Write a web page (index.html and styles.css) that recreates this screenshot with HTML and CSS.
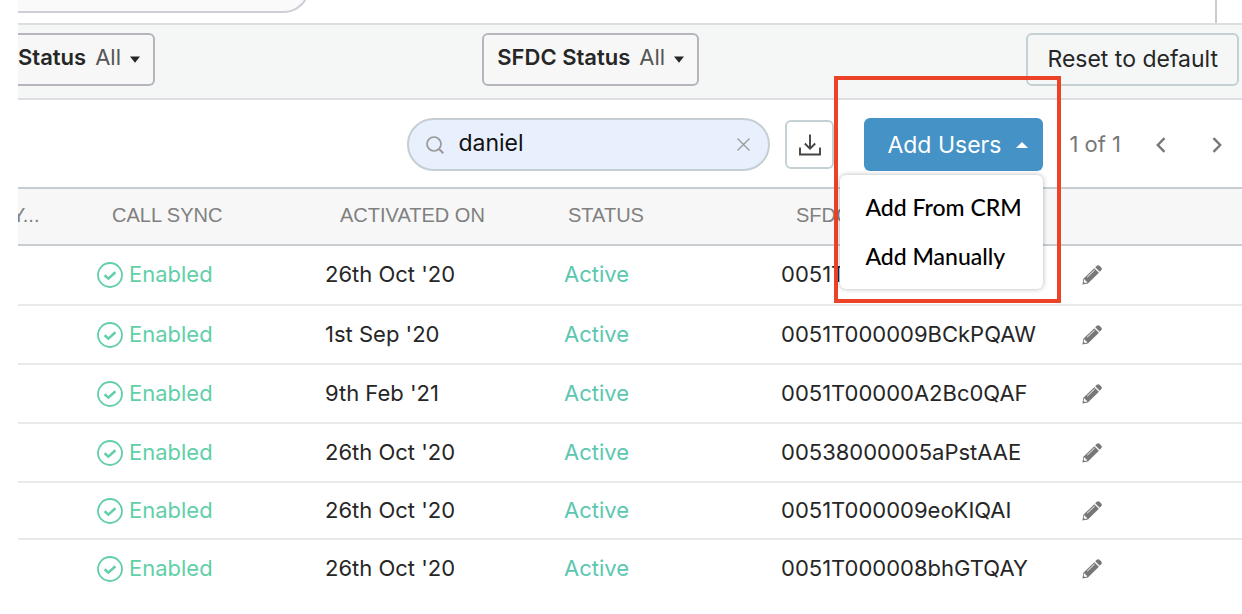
FILE: index.html
```
<!DOCTYPE html>
<html lang="en">
<head>
<meta charset="UTF-8">
<title>Users</title>
<link rel="stylesheet" href="styles.css">
</head>
<body>
<svg class="symbols" aria-hidden="true">
    <symbol id="check" viewBox="0 0 26 26">
        <circle cx="13" cy="13" r="12" fill="none" stroke="currentColor" stroke-width="1.8"/>
        <path d="M7.6 13.2l3.8 3.4 7-6.4" fill="none" stroke="currentColor" stroke-width="2.6"/>
    </symbol>
    <symbol id="pencil" viewBox="0 0 20 20">
        <path d="M0.4 19.6l1-5.8L12.3 3.2l4.6 4.6L5.9 18.5z" fill="currentColor"/>
        <path d="M13.2 2.3l1.6-1.5c.9-.8 1.9-.8 2.8 0l1.6 1.6c.9.9.9 1.9 0 2.8l-1.5 1.6z" fill="currentColor"/>
        <path d="M5.2 12.2l7.4-7.1" stroke="#fff" stroke-width="1"/>
        <path d="M1.6 17.1l.5-2.6 1.2.2.3 1.5 1.4.2.2 1-2.3.6z" fill="#fff"/>
    </symbol>
    <symbol id="caret" viewBox="0 0 10 7">
        <path d="M0 0.4h10L5 6.8z" fill="currentColor"/>
    </symbol>
</svg>

<main class="page">
    <div class="top">
        <div class="top-pill"></div>
        <div class="top-divider"></div>
    </div>

    <div class="filters">
        <label class="filter filter-cut">
            <span>Status</span>
            <select><option>All</option></select>
            <svg class="caret"><use href="#caret"/></svg>
        </label>
        <label class="filter">
            <span>SFDC Status</span>
            <select><option>All</option></select>
            <svg class="caret"><use href="#caret"/></svg>
        </label>
        <button class="reset">Reset to default</button>
    </div>

    <div class="toolbar">
        <div class="search">
            <svg class="search-icon" viewBox="0 0 18 18"><circle cx="8" cy="8" r="7" fill="none" stroke="currentColor" stroke-width="1.7"/><path d="M13 13l4.3 4.3" stroke="currentColor" stroke-width="2"/></svg>
            <input type="text" value="daniel" aria-label="Search users">
            <button class="clear" aria-label="Clear search">
                <svg viewBox="0 0 13 13"><path d="M.5.5l12 12M12.5.5l-12 12" stroke="currentColor" stroke-width="1.3"/></svg>
            </button>
        </div>
        <button class="download" aria-label="Download">
            <svg viewBox="0 0 22 22" fill="none" stroke="currentColor" stroke-width="1.9"><path d="M11 .5v14M5.8 9.5l5.2 5.2 5.2-5.2M1 13.5v7h20v-7"/></svg>
        </button>
        <div class="add">
            <button class="add-button">Add Users
                <svg viewBox="0 0 12 6"><path d="M0 6h12L6 0z" fill="currentColor"/></svg>
            </button>
            <div class="highlight"></div>
            <div class="menu">
                <button>Add From CRM</button>
                <button>Add Manually</button>
            </div>
        </div>
        <div class="pager">
            <span>1 of 1</span>
            <button aria-label="Previous page"><svg viewBox="0 0 10 16"><path d="M8.5 1.2L1.8 8l6.7 6.8" fill="none" stroke="currentColor" stroke-width="2.4"/></svg></button>
            <button aria-label="Next page"><svg viewBox="0 0 10 16"><path d="M1.5 1.2L8.2 8l-6.7 6.8" fill="none" stroke="currentColor" stroke-width="2.4"/></svg></button>
        </div>
    </div>

    <table class="users">
        <colgroup>
            <col class="col-cut"><col class="col-data"><col class="col-data"><col class="col-data"><col class="col-id"><col>
        </colgroup>
        <thead>
            <tr>
                <th class="cut"><span>Y...</span></th>
                <th>CALL SYNC</th>
                <th>ACTIVATED ON</th>
                <th>STATUS</th>
                <th>SFDC ID</th>
                <th></th>
            </tr>
        </thead>
        <tbody>
            <tr class="first">
                <td></td>
                <td><span class="enabled"><svg><use href="#check"/></svg>Enabled</span></td>
                <td>26th Oct '20</td>
                <td class="active">Active</td>
                <td>0051T0000</td>
                <td><button class="edit" aria-label="Edit"><svg><use href="#pencil"/></svg></button></td>
            </tr>
            <tr>
                <td></td>
                <td><span class="enabled"><svg><use href="#check"/></svg>Enabled</span></td>
                <td>1st Sep '20</td>
                <td class="active">Active</td>
                <td>0051T000009BCkPQAW</td>
                <td><button class="edit" aria-label="Edit"><svg><use href="#pencil"/></svg></button></td>
            </tr>
            <tr>
                <td></td>
                <td><span class="enabled"><svg><use href="#check"/></svg>Enabled</span></td>
                <td>9th Feb '21</td>
                <td class="active">Active</td>
                <td>0051T00000A2Bc0QAF</td>
                <td><button class="edit" aria-label="Edit"><svg><use href="#pencil"/></svg></button></td>
            </tr>
            <tr>
                <td></td>
                <td><span class="enabled"><svg><use href="#check"/></svg>Enabled</span></td>
                <td>26th Oct '20</td>
                <td class="active">Active</td>
                <td>00538000005aPstAAE</td>
                <td><button class="edit" aria-label="Edit"><svg><use href="#pencil"/></svg></button></td>
            </tr>
            <tr class="compact">
                <td></td>
                <td><span class="enabled"><svg><use href="#check"/></svg>Enabled</span></td>
                <td>26th Oct '20</td>
                <td class="active">Active</td>
                <td>0051T000009eoKIQAI</td>
                <td><button class="edit" aria-label="Edit"><svg><use href="#pencil"/></svg></button></td>
            </tr>
            <tr>
                <td></td>
                <td><span class="enabled"><svg><use href="#check"/></svg>Enabled</span></td>
                <td>26th Oct '20</td>
                <td class="active">Active</td>
                <td>0051T000008bhGTQAY</td>
                <td><button class="edit" aria-label="Edit"><svg><use href="#pencil"/></svg></button></td>
            </tr>
        </tbody>
    </table>
</main>
</body>
</html>
```
FILE: styles.css
```
* {
    box-sizing: border-box;
}
body {
    margin: 0;
    background: #fff;
    color: #262626;
    font-family: Inter, "Liberation Sans", sans-serif;
    font-size: 22px;
    line-height: 26px;
}
button, select, input {
    margin: 0;
    padding: 0;
    border: none;
    background: none;
    color: inherit;
    font: inherit;
}
button {
    cursor: pointer;
}
svg {
    display: block;
    flex: none;
}
.symbols {
    position: absolute;
    width: 0;
    height: 0;
}
.page {
    margin-left: 18px;
    overflow: hidden;
}

.top {
    display: flex;
    justify-content: space-between;
    height: 25px;
    padding-right: 25px;
    overflow: hidden;
    border-bottom: 2px solid #dedede;
}
.top-pill {
    width: 292px;
    height: 53px;
    margin-top: -40px;
    background: #fafafa;
    border: 2px solid #cdced6;
    border-left: none;
    border-radius: 0 27px 27px 0;
}
.top-divider {
    width: 2px;
    background: #ccc;
}

.filters {
    display: flex;
    justify-content: space-between;
    padding: 8px 3px 12px 0;
    background: #f5f7f7;
    border-bottom: 2px solid #dcdee3;
}
.filter {
    display: flex;
    align-items: center;
    gap: 9px;
    height: 53px;
    padding: 0 13px 6px;
    background: #f7f7f7;
    border: 2px solid #b5b5bd;
    border-radius: 6px;
}
.filter span {
    font-weight: 600;
}
.filter select {
    appearance: none;
    color: #555;
}
.filter-cut {
    padding-left: 0;
    border-left: none;
    border-radius: 0 6px 6px 0;
}
.caret {
    width: 10px;
    height: 7px;
    margin-top: 6px;
}
.reset {
    height: 53px;
    padding: 0 19px 2px;
    border: 2px solid #c5d0d4;
    border-radius: 6px;
    font-size: 23px;
}

.toolbar {
    display: flex;
    justify-content: flex-end;
    align-items: center;
    height: 87px;
    padding: 2px 20px 0 0;
}
.search {
    display: flex;
    align-items: center;
    width: 363px;
    height: 53px;
    padding: 0 18px 0 17px;
    background: #e8effd;
    border: 2px solid #c5ced3;
    border-radius: 27px;
    color: #999;
}
.search-icon {
    width: 18px;
    height: 18px;
}
.search input {
    flex: 1;
    min-width: 0;
    padding: 0 0 3px 14px;
    color: #111;
    font-size: 23px;
    outline: none;
}
.clear svg {
    width: 13px;
    height: 13px;
}
.download {
    display: grid;
    place-items: center;
    width: 49px;
    height: 49px;
    margin: 0 30px 0 15px;
    border: 2px solid #c5d0d4;
    border-radius: 6px;
    color: #444;
}
.download svg {
    width: 22px;
    height: 22px;
}
.add {
    position: relative;
}
.add-button {
    display: flex;
    align-items: center;
    justify-content: center;
    gap: 15px;
    width: 179px;
    height: 53px;
    padding-left: 8px;
    background: #4592c6;
    border-radius: 6px;
    color: #fff;
    font-size: 23px;
}
.add-button svg {
    width: 12px;
    height: 6px;
}
.menu {
    position: absolute;
    top: 57px;
    right: 0;
    width: 203px;
    padding: 7px 0 9px;
    background: #fff;
    border-radius: 6px;
    box-shadow: 0 0 5px rgba(0, 0, 0, 0.3);
}
.menu button {
    display: block;
    width: 100%;
    height: 49px;
    padding-left: 25px;
    color: #000;
    font-family: Lato, sans-serif;
    font-size: 23px;
    font-weight: 500;
    text-align: left;
}
/* red frame around the add menu */
.highlight {
    position: absolute;
    inset: -42px -18px -132px -30px;
    border: 4px solid #ec4228;
    pointer-events: none;
}
.pager {
    display: flex;
    align-items: center;
    gap: 46px;
    margin-left: 26px;
    color: #777;
}
.pager span {
    margin-right: -11px;
    padding-bottom: 2px;
}
.pager svg {
    width: 10px;
    height: 16px;
}

.users {
    width: 100%;
    table-layout: fixed;
    border-spacing: 0;
}
.col-cut {
    width: 79px;
}
.col-data {
    width: 228px;
}
.col-id {
    width: 301px;
}
.users th, .users td {
    padding: 0;
    text-align: left;
    white-space: nowrap;
}
.users th {
    height: 59px;
    padding-left: 15px;
    padding-bottom: 3px;
    background: #f7f7f7;
    border: 2px solid #c7cdd0;
    border-width: 2px 0;
    color: #808080;
    font-family: "Liberation Sans", sans-serif;
    font-size: 20px;
    font-weight: 400;
}
.users .cut {
    padding-left: 0;
    overflow: hidden;
}
.cut span {
    margin-left: -6px;
}
.users td {
    height: 59px;
    padding-bottom: 2px;
    border-bottom: 2px solid #e9e9e9;
}
.users .first td {
    height: 60px;
}
.users .compact td {
    height: 57px;
}
.users tr:last-child td {
    border-bottom-color: transparent;
}
.users .active {
    padding-left: 11px;
    color: #5cc7b0;
}
.enabled {
    display: flex;
    align-items: center;
    gap: 6px;
    color: #62cfa8;
}
.enabled svg {
    width: 26px;
    height: 26px;
    margin-top: 2px;
}
.edit {
    display: block;
    margin-top: 2px;
    color: #777;
}
.edit svg {
    width: 20px;
    height: 20px;
}
```
